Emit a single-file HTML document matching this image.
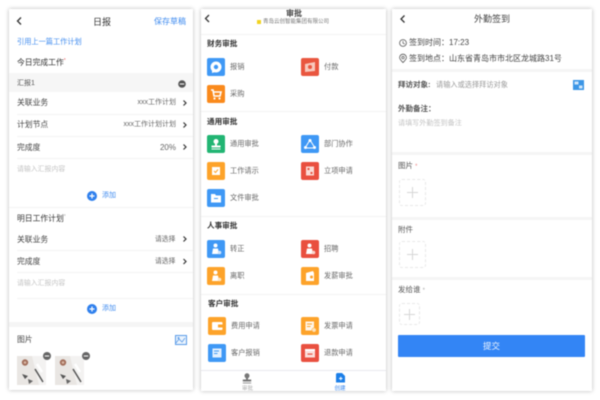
<!DOCTYPE html>
<html lang="zh"><head><meta charset="utf-8"><style>
html,body{margin:0;padding:0;background:#fff}
#r{position:relative;width:600px;height:400px;overflow:hidden;background:#fff;font-family:"Liberation Sans","Noto Sans CJK SC",sans-serif;color:#444;filter:blur(.55px)}
.p{position:absolute;background:#fff;box-shadow:0 0 4px rgba(0,0,0,.28)}
.t{position:absolute;line-height:14px;height:14px;white-space:nowrap;font-size:7.8px}
.ph{color:#c4c4c4;font-size:7px}
.bl{color:#3f8bef}
.g{color:#666;font-size:7px}
.h{font-weight:bold;font-size:7.6px;color:#333}
.l{position:absolute;height:1px;background:#f3f3f3}
.band{position:absolute;background:#f5f5f5}
svg{position:absolute;overflow:visible}
.ic{position:absolute;width:18px;height:18px;border-radius:2px}
.ic svg{left:0;top:0}
.box{position:absolute;border:1px dashed #e8e8e8;border-radius:3px;box-sizing:border-box}
.box:before,.box:after{content:"";position:absolute;background:#d6d6d6;left:50%;top:50%}
.box:before{width:11px;height:1px;margin:-.5px 0 0 -5.5px}
.box:after{width:1px;height:11px;margin:-5.5px 0 0 -.5px}
</style></head><body><div id="r">

<div class="p" style="left:9px;top:9px;width:184px;height:381px"></div>
<div class="p" style="left:201px;top:9px;width:185px;height:382px"></div>
<div class="p" style="left:392px;top:9px;width:200px;height:382px"></div>

<!-- Panel 1 -->
<svg style="left:0;top:0" width="10" height="10"><path d="M21 17.5L17.5 21L21 24.5" fill="none" stroke="#333" stroke-width="1.3"/></svg>
<span class="t" style="left:93px;top:15px;font-size:9px;color:#333">日报</span>
<span class="t bl" style="left:154px;top:15px;font-size:8px">保存草稿</span>
<span class="t bl" style="left:17px;top:35px;font-size:7.2px">引用上一篇工作计划</span>
<span class="t" style="left:17px;top:54px;color:#333">今日完成工作<span style="color:#e66;font-size:5px;vertical-align:3px">*</span></span>
<div class="band" style="left:9px;top:73px;width:184px;height:19px;background:#f6f6f6"></div>
<span class="t" style="left:17px;top:77px;font-size:7px;color:#555">汇报1</span>
<svg style="left:178px;top:80px" width="8" height="8"><circle cx="4" cy="4" r="3.8" fill="#555"/><rect x="1.8" y="3.5" width="4.4" height="1" fill="#fff"/></svg>
<span class="t" style="left:17px;top:96px">关联业务</span>
<span class="t g" style="right:424px;top:96px;font-size:7px">xxx工作计划</span>
<span class="t" style="left:17px;top:118px">计划节点</span>
<span class="t g" style="right:424px;top:118px;font-size:7px">xxx工作计划计划</span>
<span class="t" style="left:17px;top:141px">完成度</span>
<span class="t g" style="right:424px;top:141px;font-size:8px">20%</span>
<div class="l" style="left:17px;top:114px;width:176px"></div>
<div class="l" style="left:17px;top:136px;width:176px"></div>
<div class="l" style="left:17px;top:158px;width:176px"></div>
<svg style="left:0;top:0" width="10" height="10">
<path d="M183.5 100.5L186 103L183.5 105.5M183.5 122.5L186 125L183.5 127.5M183.5 144.5L186 147L183.5 149.5M183.5 236.5L186 239L183.5 241.5M183.5 259L186 261.500L183.5 264" fill="none" stroke="#333" stroke-width="1.2"/>
</svg>
<span class="t ph" style="left:17px;top:163px;font-size:6.9px">请输入汇报内容</span>
<svg style="left:87px;top:190.500px" width="10" height="10"><circle cx="5" cy="5" r="5" fill="#2f80ed"/><path d="M2.500 5H7.500M5 2.500V7.500" stroke="#fff" stroke-width="1.2"/></svg>
<span class="t bl" style="left:102px;top:188.500px;font-size:7px">添加</span>
<div class="l" style="left:9px;top:207px;width:184px"></div>
<span class="t" style="left:17px;top:210px;color:#333">明日工作计划<span style="color:#aaa;font-size:5px;vertical-align:3px">*</span></span>
<span class="t" style="left:17px;top:232.500px">关联业务</span>
<span class="t g" style="left:155px;top:232.500px;font-size:6.800px">请选择</span>
<span class="t" style="left:17px;top:255px">完成度</span>
<span class="t g" style="left:155px;top:255px;font-size:6.800px">请选择</span>
<div class="l" style="left:17px;top:250px;width:176px"></div>
<div class="l" style="left:17px;top:272px;width:176px"></div>
<div class="l" style="left:17px;top:298px;width:176px"></div>
<span class="t ph" style="left:17px;top:277px;font-size:6.9px">请输入汇报内容</span>
<svg style="left:87px;top:304px" width="10" height="10"><circle cx="5" cy="5" r="5" fill="#2f80ed"/><path d="M2.500 5H7.500M5 2.500V7.500" stroke="#fff" stroke-width="1.2"/></svg>
<span class="t bl" style="left:102px;top:302px;font-size:7px">添加</span>
<div class="band" style="left:9px;top:322px;width:184px;height:5px"></div>
<span class="t" style="left:17px;top:333px">图片</span>
<svg style="left:175px;top:335px" width="12" height="10"><rect x=".5" y=".5" width="11" height="9" fill="#eaf3fd" stroke="#5a9be8"/><path d="M1 8L4 4L7 7L10 3" fill="none" stroke="#5a9be8" stroke-width=".8"/><circle cx="3.500" cy="3" r="1" fill="#5a9be8"/></svg>

<svg style="left:17px;top:356px" width="29" height="29"><rect width="29" height="29" fill="#e9e6e3"/><path d="M15 0L29 0V29H22Z" fill="#f3f2f1"/><circle cx="8" cy="6.500" r="3.200" fill="#a36f5c"/><circle cx="8" cy="6.500" r="1.300" fill="#d9b7a4"/><path d="M18 13L26 26" stroke="#555" stroke-width="1.500"/><path d="M20 8L25 16" stroke="#fff" stroke-width="2.500"/><path d="M5 18L11 20L8 23Z" fill="#555"/><path d="M11 23L16 25L12 28Z" fill="#666"/></svg>
<svg style="left:55px;top:356px" width="29" height="29"><rect width="29" height="29" fill="#e9e6e3"/><path d="M15 0L29 0V29H22Z" fill="#f3f2f1"/><circle cx="8" cy="6.500" r="3.200" fill="#a36f5c"/><circle cx="8" cy="6.500" r="1.300" fill="#d9b7a4"/><path d="M18 13L26 26" stroke="#555" stroke-width="1.500"/><path d="M20 8L25 16" stroke="#fff" stroke-width="2.500"/><path d="M5 18L11 20L8 23Z" fill="#555"/><path d="M11 23L16 25L12 28Z" fill="#666"/></svg>
<svg style="left:43px;top:352px" width="8" height="8"><circle cx="4" cy="4" r="4" fill="#666"/><rect x="1.800" y="3.500" width="4.400" height="1" fill="#fff"/></svg>
<svg style="left:81.500px;top:352px" width="8" height="8"><circle cx="4" cy="4" r="4" fill="#666"/><rect x="1.800" y="3.500" width="4.400" height="1" fill="#fff"/></svg>

<!-- Panel 2 -->
<svg style="left:0;top:0" width="10" height="10"><path d="M209 15L205.500 18.500L209 22" fill="none" stroke="#333" stroke-width="1.300"/></svg>
<span class="t" style="left:286px;top:7px;font-size:8px;font-weight:bold;color:#444">审批</span>
<div style="position:absolute;left:257px;top:20px;width:4px;height:4px;background:#f2d320"></div>
<span class="t" style="left:263px;top:15px;font-size:5.500px;color:#777">青岛云创智能集团有限公司</span>
<div class="l" style="left:201px;top:34px;width:185px"></div>
<span class="t h" style="left:207px;top:37px">财务审批</span>

<div class="ic" style="left:207px;top:58px;background:#3f98f5"><svg width="18" height="18"><circle cx="9" cy="9" r="5.500" fill="#fff"/><circle cx="9" cy="9" r="2.200" fill="#3f98f5"/><path d="M5 12L5 15L8 14Z" fill="#fff"/></svg></div>
<span class="t g" style="left:230px;top:60px;font-size:7.200px">报销</span>
<div class="ic" style="left:301px;top:58px;background:#e9563f"><svg width="18" height="18"><path d="M4 6L14 4V13L4 14Z" fill="#f8c9bd"/><circle cx="9" cy="9" r="2" fill="#e9563f"/></svg></div>
<span class="t g" style="left:324px;top:60px;font-size:7.200px">付款</span>
<div class="ic" style="left:207px;top:85px;background:#fa8a1c"><svg width="18" height="18"><path d="M4 5H6L7 11H13L14 7H6.500" fill="none" stroke="#fff" stroke-width="1.600"/><circle cx="7.500" cy="13.500" r="1.100" fill="#fff"/><circle cx="12.500" cy="13.500" r="1.100" fill="#fff"/></svg></div>
<span class="t g" style="left:230px;top:87px;font-size:7.200px">采购</span>
<div class="l" style="left:201px;top:111px;width:185px"></div>

<span class="t h" style="left:207px;top:114.500px">通用审批</span>
<div class="ic" style="left:207px;top:135px;background:#22b573"><svg width="18" height="18"><circle cx="9" cy="6.500" r="2.500" fill="#fff"/><rect x="8" y="8" width="2" height="3" fill="#fff"/><rect x="4.500" y="10.500" width="9" height="2" fill="#fff"/><rect x="4.500" y="13.500" width="9" height="1" fill="#fff"/></svg></div>
<span class="t g" style="left:230px;top:137px;font-size:7.200px">通用审批</span>
<div class="ic" style="left:301px;top:135px;background:#3f98f5"><svg width="18" height="18"><path d="M9 5L14 13H4Z" fill="none" stroke="#fff" stroke-width="1"/><circle cx="9" cy="5.500" r="1.500" fill="#fff"/><circle cx="4.500" cy="12.500" r="1.500" fill="#fff"/><circle cx="13.500" cy="12.500" r="1.500" fill="#fff"/></svg></div>
<span class="t g" style="left:324px;top:137px;font-size:7.200px">部门协作</span>
<div class="ic" style="left:207px;top:162px;background:#fda32a"><svg width="18" height="18"><rect x="5" y="5" width="8" height="8" fill="#fff"/><path d="M7 9L8.500 10.500L11 7.500" fill="none" stroke="#fda32a" stroke-width="1"/></svg></div>
<span class="t g" style="left:230px;top:164px;font-size:7.200px">工作请示</span>
<div class="ic" style="left:301px;top:162px;background:#e9503f"><svg width="18" height="18"><rect x="5" y="4.500" width="8" height="9" fill="#fbdcd6"/><rect x="6.500" y="6" width="2" height="2" fill="#e9503f"/><rect x="9.500" y="10" width="2" height="2" fill="#e9503f"/></svg></div>
<span class="t g" style="left:324px;top:164px;font-size:7.200px">立项申请</span>
<div class="ic" style="left:207px;top:189px;background:#3f98f5"><svg width="18" height="18"><path d="M4 5H8L9 6.500H14V13.500H4Z" fill="#fff"/><rect x="7" y="9" width="4" height="1" fill="#3f98f5"/></svg></div>
<span class="t g" style="left:230px;top:191px;font-size:7.200px">文件审批</span>
<div class="l" style="left:201px;top:216px;width:185px"></div>

<span class="t h" style="left:207px;top:219px">人事审批</span>
<div class="ic" style="left:207px;top:239.500px;background:#3f98f5"><svg width="18" height="18"><circle cx="8.500" cy="5.500" r="2" fill="#fff"/><path d="M5 14L6 8.500H11L12 14Z" fill="#fff"/><circle cx="12.500" cy="12.500" r="1.800" fill="#cfe4fc"/></svg></div>
<span class="t g" style="left:230px;top:241.500px;font-size:7.200px">转正</span>
<div class="ic" style="left:301px;top:239.500px;background:#e9503f"><svg width="18" height="18"><circle cx="8.500" cy="5.500" r="2" fill="#fff"/><path d="M5 14L6 8.500H11L12 14Z" fill="#fff"/><circle cx="12.500" cy="12.500" r="1.800" fill="#fbd5cd"/></svg></div>
<span class="t g" style="left:324px;top:241.500px;font-size:7.200px">招聘</span>
<div class="ic" style="left:207px;top:267px;background:#fda32a"><svg width="18" height="18"><circle cx="8.500" cy="5.500" r="2" fill="#fff"/><path d="M5 14L6 8.500H11L12 14Z" fill="#fff"/><circle cx="12.500" cy="12.500" r="1.800" fill="#fde6c5"/></svg></div>
<span class="t g" style="left:230px;top:269px;font-size:7.200px">离职</span>
<div class="ic" style="left:301px;top:267px;background:#fda32a"><svg width="18" height="18"><path d="M5 6L12 4L13 6V14H5Z" fill="#fff"/><circle cx="10.500" cy="10" r="1.500" fill="#fda32a"/></svg></div>
<span class="t g" style="left:324px;top:269px;font-size:7.200px">发薪审批</span>
<div class="l" style="left:201px;top:294px;width:185px"></div>

<span class="t h" style="left:208px;top:296.500px">客户审批</span>
<div class="ic" style="left:208px;top:316.500px;background:#fda32a"><svg width="18" height="18"><rect x="4" y="5" width="10.500" height="8" rx="1" fill="#fff"/><rect x="10" y="7.500" width="4.500" height="3" fill="#fda32a"/></svg></div>
<span class="t g" style="left:231px;top:318.500px;font-size:7.200px">费用申请</span>
<div class="ic" style="left:301px;top:316.500px;background:#fda32a"><svg width="18" height="18"><rect x="4.500" y="4.500" width="8.500" height="9" fill="#fff" opacity=".9"/><rect x="6" y="6.500" width="5" height="1" fill="#fda32a"/><rect x="6" y="9" width="3.500" height="1" fill="#fda32a"/><circle cx="13" cy="13" r="2.200" fill="#fde3bc" stroke="#fda32a" stroke-width=".5"/></svg></div>
<span class="t g" style="left:324px;top:318.500px;font-size:7.200px">发票申请</span>
<div class="ic" style="left:208px;top:344px;background:#3f98f5"><svg width="18" height="18"><rect x="4.500" y="4.500" width="9" height="9" fill="#e4f0fe"/><rect x="6" y="6.500" width="5" height="1" fill="#3f98f5"/><rect x="6" y="9" width="3.500" height="1" fill="#3f98f5"/></svg></div>
<span class="t g" style="left:231px;top:346px;font-size:7.200px">客户报销</span>
<div class="ic" style="left:301px;top:344px;background:#e9503f"><svg width="18" height="18"><rect x="4" y="5" width="10" height="8.500" fill="#fbe0da"/><rect x="4" y="5" width="10" height="2" fill="#fff"/><rect x="6.500" y="9.500" width="5" height="1.200" fill="#e9503f"/></svg></div>
<span class="t g" style="left:324px;top:346px;font-size:7.200px">退款申请</span>

<div class="l" style="left:201px;top:370px;width:185px;background:#e8e8ee"></div>
<svg style="left:242px;top:373px" width="10" height="11"><circle cx="5" cy="2.800" r="2.500" fill="#777"/><rect x="4" y="4" width="2" height="3" fill="#777"/><rect x=".8" y="6.500" width="8.400" height="2" fill="#777"/><rect x=".8" y="9.500" width="8.400" height="1" fill="#999"/></svg>
<span class="t" style="left:242px;top:382px;font-size:5.500px;color:#aaa">审批</span>
<svg style="left:335.500px;top:373px" width="9" height="10"><path d="M1 0H6L9 3V9.500H0V1Z" fill="#1c7fe8"/><path d="M3 5.500H6.500M4.750 3.700V7.300" stroke="#fff" stroke-width="1"/></svg>
<span class="t bl" style="left:334.500px;top:382px;font-size:5.500px">创建</span>

<!-- Panel 3 -->
<svg style="left:0;top:0" width="10" height="10"><path d="M404.500 15.500L401 19L404.500 22.500" fill="none" stroke="#333" stroke-width="1.300"/></svg>
<span class="t" style="left:474px;top:12px;font-size:9px;color:#444">外勤签到</span>
<svg style="left:399px;top:39px" width="8" height="8"><circle cx="4" cy="4" r="3.400" fill="none" stroke="#555" stroke-width=".8"/><path d="M4 2V4.200L5.700 5" fill="none" stroke="#555" stroke-width=".7"/></svg>
<span class="t" style="left:409px;top:36px;font-size:8px">签到时间：17:23</span>
<svg style="left:399px;top:54px" width="8" height="9"><path d="M4 8.500C2 6.500.6 5.200.6 3.600A3.400 3.400 0 0 1 7.400 3.600C7.400 5.200 6 6.500 4 8.500Z" fill="none" stroke="#555" stroke-width=".8"/><circle cx="4" cy="3.600" r="1.200" fill="none" stroke="#555" stroke-width=".7"/></svg>
<span class="t" style="left:409px;top:52px;font-size:8px">签到地点：山东省青岛市市北区龙城路31号</span>
<div class="band" style="left:392px;top:69px;width:200px;height:3px"></div>
<span class="t" style="left:398px;top:77.500px;font-size:7.500px;font-weight:bold;color:#555">拜访对象:</span>
<span class="t" style="left:436px;top:77.500px;font-size:7.200px;color:#999">请输入或选择拜访对象</span>
<svg style="left:573px;top:80px" width="11" height="10"><rect width="11" height="10" fill="#3c96e6"/><rect x="1.500" y="1.500" width="4" height="3" fill="#cfe6fa"/><rect x="6" y="5.500" width="3.500" height="3" fill="#cfe6fa"/></svg>
<span class="t" style="left:398px;top:102px;font-size:7.500px;font-weight:bold;color:#555">外勤备注：</span>
<span class="t ph" style="left:398px;top:116px;font-size:7.100px">请填写外勤签到备注</span>
<div class="band" style="left:392px;top:152px;width:200px;height:3px"></div>
<span class="t" style="left:398px;top:159px;font-size:7.500px;color:#555">图片 <span style="color:#e88;font-size:6px">*</span></span>
<div class="box" style="left:399px;top:179px;width:26.500px;height:26.500px"></div>
<div class="band" style="left:392px;top:217px;width:200px;height:3px"></div>
<span class="t" style="left:398px;top:223px;font-size:7.500px;color:#555">附件</span>
<div class="box" style="left:399px;top:241px;width:26.500px;height:27px"></div>
<div class="band" style="left:392px;top:277px;width:200px;height:3px"></div>
<span class="t" style="left:398px;top:283px;font-size:7.500px;color:#555">发给谁 <span style="color:#aaa;font-size:6px">*</span></span>
<div class="box" style="left:399px;top:303px;width:20.500px;height:22px"></div>
<div style="position:absolute;left:398px;top:335px;width:187px;height:22px;background:#3385f5;border-radius:1px"></div>
<span class="t" style="left:483px;top:339px;font-size:8.500px;color:#eaf3ff">提交</span>

</div></body></html>
